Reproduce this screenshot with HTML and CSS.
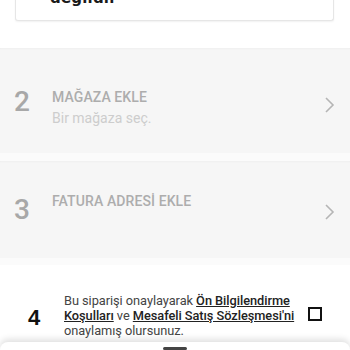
FILE: index.html
```html
<!DOCTYPE html>
<html>
<head>
<meta charset="utf-8">
<link rel="stylesheet" href="styles.css">
</head>
<body>
<div class="page">
  <div class="top-card">
    <div class="top-text">değildir</div>
  </div>
  <div class="steps">
    <div class="step step-2">
      <div class="num">2</div>
      <div class="info">
        <div class="title">MAĞAZA EKLE</div>
        <div class="sub">Bir mağaza seç.</div>
      </div>
      <svg class="chev" width="12" height="18" viewBox="0 0 12 18"><path d="M2 2 L9 9 L2 16" fill="none" stroke="#b5b5b5" stroke-width="1.6"/></svg>
    </div>
    <div class="step step-3">
      <div class="num">3</div>
      <div class="info">
        <div class="title">FATURA ADRESİ EKLE</div>
      </div>
      <svg class="chev" width="12" height="18" viewBox="0 0 12 18"><path d="M2 2 L9 9 L2 16" fill="none" stroke="#b5b5b5" stroke-width="1.6"/></svg>
    </div>
  </div>
  <div class="confirm">
    <div class="num4">4</div>
    <div class="ctext">Bu siparişi onaylayarak <u class="lnk">Ön Bilgilendirme</u><br><u class="lnk">Koşulları</u> ve <u class="lnk">Mesafeli Satış Sözleşmesi'ni</u><br>onaylamış olursunuz.</div>
    <div class="check"></div>
  </div>
  <div class="sheet"><div class="handle"></div></div>
</div>
</body>
</html>
```
FILE: styles.css
```css
html, body { margin: 0; padding: 0; background: #fff; }
body { width: 350px; height: 350px; overflow: hidden; font-family: Roboto, "Liberation Sans", sans-serif; }
.page { display: flex; flex-direction: column; margin-top: -20px; }
.top-card {
  margin: 0 16px 0 15px;
  height: 40px;
  border: 1px solid #e6e6e6;
  border-top: none;
  border-radius: 0 0 3px 3px;
  box-shadow: 0 1px 2px rgba(0,0,0,0.06);
  background: #fff;
  padding-left: 34px;
  overflow: hidden;
}
.top-text { font-family: "DejaVu Sans", sans-serif; font-weight: bold; font-size: 15px; color: #1a1a1a; line-height: 18px; margin-top: 9px; letter-spacing: 0.2px; }
.steps { margin-top: 27px; display: flex; flex-direction: column; gap: 8px; background: #fbfbfb; padding-bottom: 7px; }
.step {
  background: #f6f6f6;
  display: flex;
  align-items: center;
  padding: 0 16px 0 14px;
  box-shadow: inset 0 2px 2px -1px rgba(0,0,0,0.03);
}
.step-2 { height: 105px; }
.step-3 { height: 97px; }
.num { width: 38px; font-size: 28px; color: #a8a8a8; font-weight: 500; flex: none; }
.step-2 .num { margin-top: 2px; }
.info { flex: 1; }
.step-2 .info { margin-top: 14px; }
.step-3 .info { margin-top: -18px; }
.title { font-size: 14px; font-weight: 500; color: #adadad; letter-spacing: 0.1px; }
.sub { font-size: 14px; color: #cdcdcd; margin-top: 5px; }
.chev { flex: none; margin-right: -2px; }
.step-2 .chev { margin-top: 8px; }
.step-3 .chev { margin-top: 4px; }
.confirm {
  display: flex;
  align-items: flex-start;
  padding: 28px 28px 0 28px;
  height: 49px;
}
.num4 { width: 36px; flex: none; font-size: 22px; font-weight: bold; color: #111; font-family: "Liberation Sans", sans-serif; margin-top: 12px; }
.ctext { flex: none; font-size: 12.8px; line-height: 15px; color: #444; white-space: nowrap; letter-spacing: -0.05px; }
.lnk { color: #222; font-weight: 500; }
.check { margin-left: auto; flex: none; width: 10px; height: 10px; border: 2px solid #111; margin-top: 14px; }
.sheet {
  margin-top: 0;
  height: 20px;
  background: #fff;
  border-radius: 8px 8px 0 0;
  box-shadow: 0 -3px 6px rgba(0,0,0,0.12);
  display: flex;
  justify-content: center;
}
.handle { width: 24px; height: 3px; background: #444; border-radius: 2px; margin-top: 5px; }
```
